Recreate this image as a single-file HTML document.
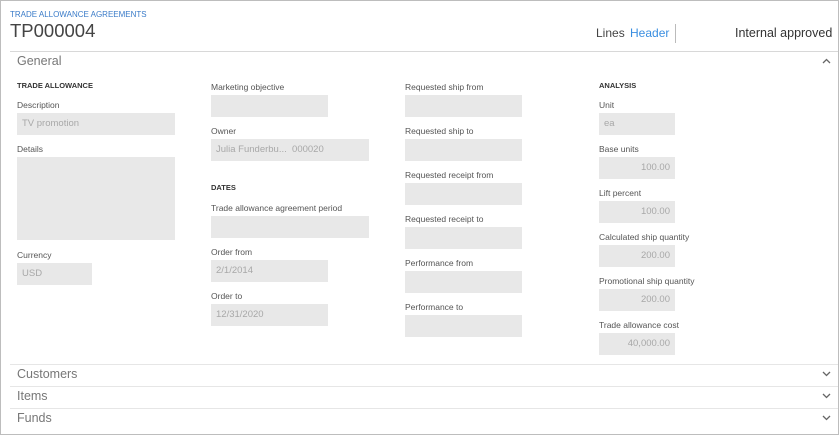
<!DOCTYPE html>
<html><head><style>
*{margin:0;padding:0;box-sizing:border-box}
body{width:840px;height:436px;background:#fff;font-family:"Liberation Sans",sans-serif;position:relative;overflow:hidden;color:#333}
.frame{position:absolute;left:0;top:0;width:839px;height:435px;border:1px solid #bdbdbd}
.a{position:absolute;white-space:nowrap}
.l{position:absolute;font-size:8.5px;color:#555;white-space:nowrap;line-height:10px}
.h{position:absolute;font-size:7.5px;font-weight:bold;color:#333;white-space:nowrap;line-height:10px}
.f{position:absolute;height:22px;background:#e8e8e8;font-size:9.5px;color:#a8a8a8;line-height:22px;padding:0 5px;white-space:nowrap}
.r{text-align:right}
.line{position:absolute;height:1px;background:#e6e6e6;left:10px;width:828px}
.sec{position:absolute;left:17px;font-size:12.5px;color:#777}
</style></head><body>
<div class="frame"></div>
<div class="a" style="left:10px;top:10px;font-size:8px;color:#3a7bc8">TRADE ALLOWANCE AGREEMENTS</div>
<div class="a" style="left:10px;top:20px;font-size:18.5px;color:#444">TP000004</div>
<div class="a" style="left:596px;top:26px;font-size:12px;color:#444">Lines</div>
<div class="a" style="left:630px;top:26px;font-size:12px;color:#3a8ee0">Header</div>
<div class="a" style="left:675px;top:24px;width:1px;height:19px;background:#bbb"></div>
<div class="a" style="left:735px;top:26px;font-size:12.5px;color:#333">Internal approved</div>
<div class="line" style="top:51px;background:#d8d8d8"></div>
<div class="sec" style="top:54px">General</div>
<svg class="a" style="left:822px;top:58px" width="9" height="6"><path d="M1 5L4.5 1.5L8 5" stroke="#666" stroke-width="1.3" fill="none"/></svg>

<div class="h" style="left:17px;top:81px">TRADE ALLOWANCE</div>
<div class="l" style="left:17px;top:100px">Description</div>
<div class="f" style="left:17px;top:113px;width:158px">TV promotion</div>
<div class="l" style="left:17px;top:144px">Details</div>
<div class="f" style="left:17px;top:157px;width:158px;height:83px"></div>
<div class="l" style="left:17px;top:250px">Currency</div>
<div class="f" style="left:17px;top:263px;width:75px">USD</div>

<div class="l" style="left:211px;top:82px">Marketing objective</div>
<div class="f" style="left:211px;top:95px;width:117px"></div>
<div class="l" style="left:211px;top:126px">Owner</div>
<div class="f" style="left:211px;top:139px;width:158px">Julia Funderbu...&nbsp;&nbsp;000020</div>
<div class="h" style="left:211px;top:183px">DATES</div>
<div class="l" style="left:211px;top:203px">Trade allowance agreement period</div>
<div class="f" style="left:211px;top:216px;width:158px"></div>
<div class="l" style="left:211px;top:247px">Order from</div>
<div class="f" style="left:211px;top:260px;width:117px">2/1/2014</div>
<div class="l" style="left:211px;top:291px">Order to</div>
<div class="f" style="left:211px;top:304px;width:117px">12/31/2020</div>

<div class="l" style="left:405px;top:82px">Requested ship from</div>
<div class="f" style="left:405px;top:95px;width:117px"></div>
<div class="l" style="left:405px;top:126px">Requested ship to</div>
<div class="f" style="left:405px;top:139px;width:117px"></div>
<div class="l" style="left:405px;top:170px">Requested receipt from</div>
<div class="f" style="left:405px;top:183px;width:117px"></div>
<div class="l" style="left:405px;top:214px">Requested receipt to</div>
<div class="f" style="left:405px;top:227px;width:117px"></div>
<div class="l" style="left:405px;top:258px">Performance from</div>
<div class="f" style="left:405px;top:271px;width:117px"></div>
<div class="l" style="left:405px;top:302px">Performance to</div>
<div class="f" style="left:405px;top:315px;width:117px"></div>

<div class="h" style="left:599px;top:81px">ANALYSIS</div>
<div class="l" style="left:599px;top:100px">Unit</div>
<div class="f" style="left:599px;top:113px;width:76px">ea</div>
<div class="l" style="left:599px;top:144px">Base units</div>
<div class="f r" style="left:599px;top:157px;width:76px">100.00</div>
<div class="l" style="left:599px;top:188px">Lift percent</div>
<div class="f r" style="left:599px;top:201px;width:76px">100.00</div>
<div class="l" style="left:599px;top:232px">Calculated ship quantity</div>
<div class="f r" style="left:599px;top:245px;width:76px">200.00</div>
<div class="l" style="left:599px;top:276px">Promotional ship quantity</div>
<div class="f r" style="left:599px;top:289px;width:76px">200.00</div>
<div class="l" style="left:599px;top:320px">Trade allowance cost</div>
<div class="f r" style="left:599px;top:333px;width:76px">40,000.00</div>

<div class="line" style="top:364px"></div>
<div class="sec" style="top:367px">Customers</div>
<svg class="a" style="left:822px;top:371px" width="9" height="6"><path d="M1 1L4.5 4.5L8 1" stroke="#666" stroke-width="1.3" fill="none"/></svg>
<div class="line" style="top:386px"></div>
<div class="sec" style="top:389px">Items</div>
<svg class="a" style="left:822px;top:393px" width="9" height="6"><path d="M1 1L4.5 4.5L8 1" stroke="#666" stroke-width="1.3" fill="none"/></svg>
<div class="line" style="top:408px"></div>
<div class="sec" style="top:411px">Funds</div>
<svg class="a" style="left:822px;top:415px" width="9" height="6"><path d="M1 1L4.5 4.5L8 1" stroke="#666" stroke-width="1.3" fill="none"/></svg>
</body></html>
